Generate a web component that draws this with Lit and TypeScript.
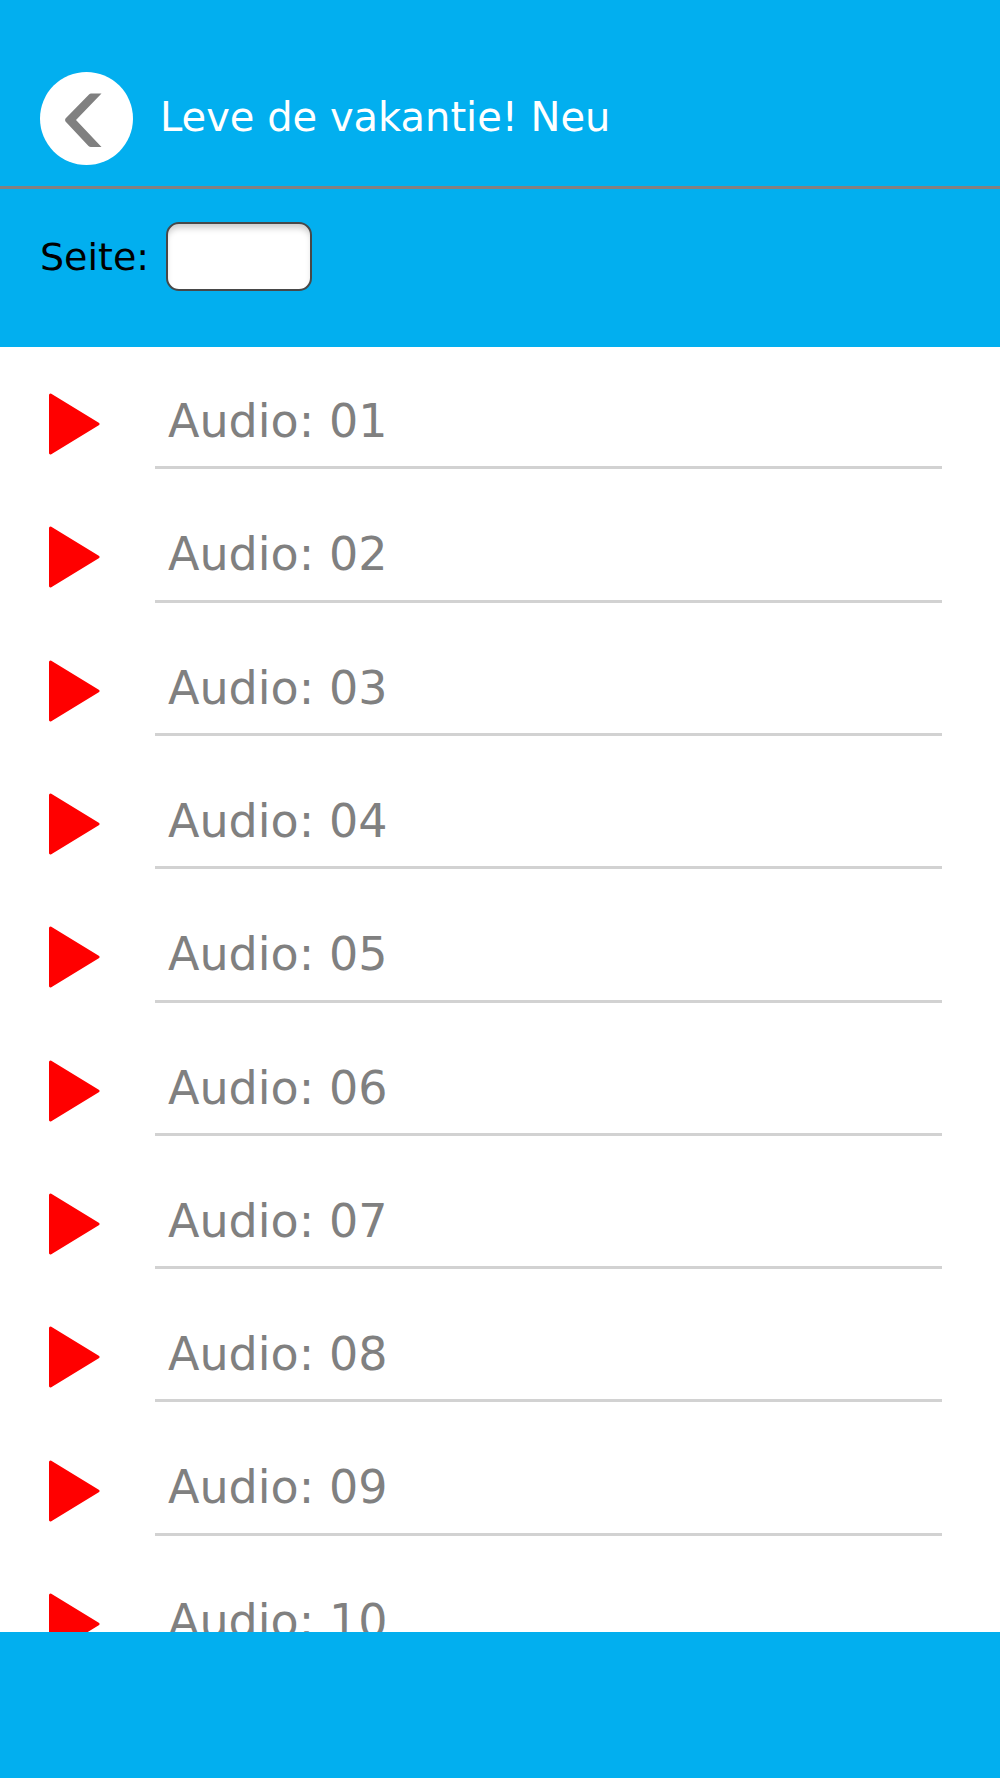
import { LitElement, html, css } from "lit";
import { customElement, property, state } from "lit/decorators.js";

@customElement("audio-row")
class AudioRow extends LitElement {
  @property() track = "";

  static styles = css`
    :host {
      display: flex;
      box-sizing: border-box;
      padding: 10px 58px 11px 40px;
    }
    .play {
      display: block;
      flex: none;
      width: 115px;
      padding: 36px 0 14px 8px;
      border: 0;
      background: none;
      text-align: left;
      cursor: pointer;
    }
    .icon {
      display: block;
      width: 54px;
      height: 62px;
      fill: #ff0000;
      stroke: #ff0000;
      stroke-width: 3;
      stroke-linejoin: round;
    }
    .label {
      flex: 1;
      box-sizing: border-box;
      padding: 36px 13px 0;
      border-bottom: 3px solid #d2d2d2;
      color: #808080;
      font-size: 46px;
      line-height: 56px;
      white-space: nowrap;
    }
  `;

  render() {
    return html`
      <button class="play" type="button" aria-label="Audio ${this.track}">
        <svg class="icon" viewBox="0 0 54 62" aria-hidden="true">
          <path d="M2.5 2 L50 31 L2.5 60 Z" />
        </svg>
      </button>
      <div class="label">Audio: ${this.track}</div>
    `;
  }
}

@customElement("app-root")
class AppRoot extends LitElement {
  @state() private tracks = ["01", "02", "03", "04", "05", "06", "07", "08", "09", "10"];

  static styles = css`
    :host {
      display: flex;
      flex-direction: column;
      height: 100vh;
      overflow: hidden;
      background: #ffffff;
      font-family: Verdana, "DejaVu Sans", sans-serif;
    }
    .header {
      display: flex;
      flex: none;
      align-items: center;
      gap: 27px;
      padding: 72px 40px 21px;
      border-bottom: 3px solid #857f80;
      background: #02afef;
    }
    .back {
      display: block;
      flex: none;
      width: 93px;
      height: 93px;
      padding: 0;
      border: 0;
      border-radius: 50%;
      background: #ffffff;
      cursor: pointer;
    }
    .chevron {
      display: block;
      width: 93px;
      height: 93px;
      fill: #808080;
    }
    .title {
      margin: 0;
      padding-bottom: 4px;
      color: #ffffff;
      font-size: 40px;
      font-weight: 400;
      line-height: 48px;
    }
    .search {
      display: flex;
      flex: none;
      align-items: center;
      gap: 17px;
      padding: 33px 40px 56px;
      background: #02afef;
      color: #000000;
      font-size: 38px;
      line-height: 48px;
    }
    .page {
      box-sizing: border-box;
      width: 146px;
      height: 69px;
      padding: 0 12px;
      border: 2px solid #484848;
      border-radius: 13px;
      background: #ffffff;
      box-shadow: inset 0 6px 6px -2px #cccccc;
      font: inherit;
      outline: none;
    }
    .list {
      flex: 1;
      min-height: 0;
      overflow: hidden;
    }
    .rows {
      display: grid;
      grid-auto-rows: 1fr;
      min-height: 1333px;
      margin: 0;
      padding: 0;
      list-style: none;
    }
    .item {
      display: grid;
    }
    .footer {
      flex: none;
      height: 146px;
      background: #02afef;
    }
  `;

  render() {
    return html`
      <header class="header">
        <button class="back" type="button" aria-label="Zurück">
          <svg class="chevron" viewBox="0 0 93 93" aria-hidden="true">
            <path d="M51 21.5 H61.5 L36 48 L61.5 75 H51 Q49.5 75 48.5 74 L25.5 49.5 Q24.5 48 25.5 46.5 L49 22.5 Q50 21.5 51 21.5 Z" />
          </svg>
        </button>
        <h1 class="title">Leve de vakantie! Neu</h1>
      </header>
      <div class="search">
        <label for="page">Seite:</label>
        <input class="page" id="page" type="text" inputmode="numeric" />
      </div>
      <main class="list">
        <ul class="rows">
          ${this.tracks.map(
            (t) => html`<li class="item"><audio-row .track=${t}></audio-row></li>`
          )}
        </ul>
      </main>
      <footer class="footer"></footer>
    `;
  }
}
